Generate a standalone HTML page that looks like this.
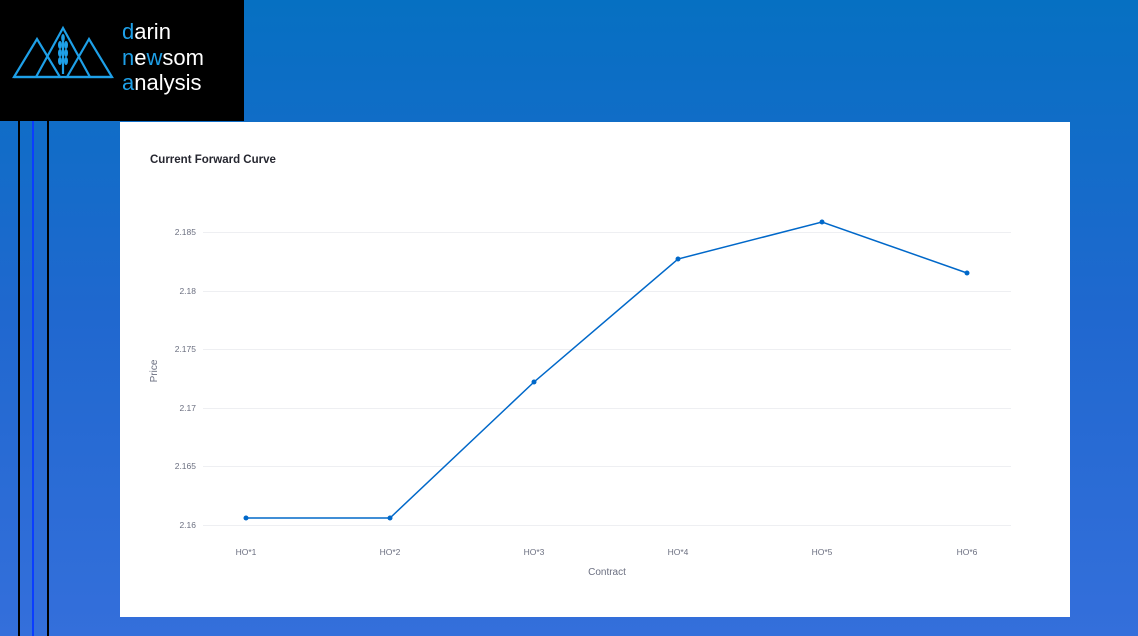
<!DOCTYPE html>
<html><head><style>
body{margin:0;width:1138px;height:636px;overflow:hidden;background:linear-gradient(180deg,#0670c2 0%,#2068cf 50%,#346fdb 100%);font-family:"Liberation Sans",sans-serif;position:relative}
.logo{position:absolute;left:0;top:0;width:244px;height:121px;background:#000}
.vl{position:absolute;top:121px;bottom:0;width:2px}
.card{position:absolute;left:120px;top:122px;width:950px;height:495px;background:#fff}
</style></head><body>
<div class="logo">
<svg width="244" height="121">
<g fill="none" stroke="#1ea0e8" stroke-width="2.2">
<path d="M14 77 L37 39 L60 77 Z"/>
<path d="M36 77 L63 28 L90 77"/>
<path d="M67 77 L89 39 L112 77 Z"/>
<path d="M14 77 H112"/>
<path d="M63 40 V74"/>
</g>
<g fill="#1ea0e8">
<ellipse cx="60" cy="45" rx="2" ry="4"/><ellipse cx="66" cy="45" rx="2" ry="4"/>
<ellipse cx="60" cy="53" rx="2" ry="4"/><ellipse cx="66" cy="53" rx="2" ry="4"/>
<ellipse cx="60" cy="61" rx="2" ry="4"/><ellipse cx="66" cy="61" rx="2" ry="4"/>
<ellipse cx="63" cy="38" rx="1.8" ry="4"/>
</g>
<g font-family="Liberation Sans,sans-serif" font-size="22" fill="#fff">
<text x="122" y="39"><tspan fill="#1ea0e8">d</tspan>arin</text>
<text x="122" y="65"><tspan fill="#1ea0e8">n</tspan>e<tspan fill="#1ea0e8">w</tspan>som</text>
<text x="122" y="90"><tspan fill="#1ea0e8">a</tspan>nalysis</text>
</g>
</svg>
</div>
<div class="vl" style="left:18px;background:#000"></div>
<div class="vl" style="left:32px;background:#0a3dff"></div>
<div class="vl" style="left:47px;background:#000"></div>
<div class="card">
<svg width="950" height="495" font-family="Liberation Sans,sans-serif">
<text x="30" y="41" font-size="11.5" font-weight="bold" fill="#262730">Current Forward Curve</text>
<g stroke="#eeeff2" stroke-width="1">
<path d="M83 110.5H891M83 169.5H891M83 227.5H891M83 286.5H891M83 344.5H891M83 403.5H891"/>
</g>
<g font-size="8.5" fill="#6b6f80" text-anchor="end">
<text x="76" y="113">2.185</text><text x="76" y="172">2.18</text><text x="76" y="230">2.175</text>
<text x="76" y="289">2.17</text><text x="76" y="347">2.165</text><text x="76" y="406">2.16</text>
</g>
<g font-size="8.5" fill="#6b6f80" text-anchor="middle">
<text x="126" y="433">HO*1</text><text x="270" y="433">HO*2</text><text x="414" y="433">HO*3</text>
<text x="558" y="433">HO*4</text><text x="702" y="433">HO*5</text><text x="847" y="433">HO*6</text>
<text x="487" y="453" font-size="10">Contract</text>
</g>
<text transform="translate(37 249) rotate(-90)" font-size="10" fill="#6b6f80" text-anchor="middle">Price</text>
<polyline fill="none" stroke="#0068c9" stroke-width="1.5" points="126,396 270,396 414,260 558,137 702,100 847,151"/>
<g fill="#0068c9"><circle cx="126" cy="396" r="2.5"/><circle cx="270" cy="396" r="2.5"/><circle cx="414" cy="260" r="2.5"/><circle cx="558" cy="137" r="2.5"/><circle cx="702" cy="100" r="2.5"/><circle cx="847" cy="151" r="2.5"/></g>
</svg>
</div>
</body></html>
